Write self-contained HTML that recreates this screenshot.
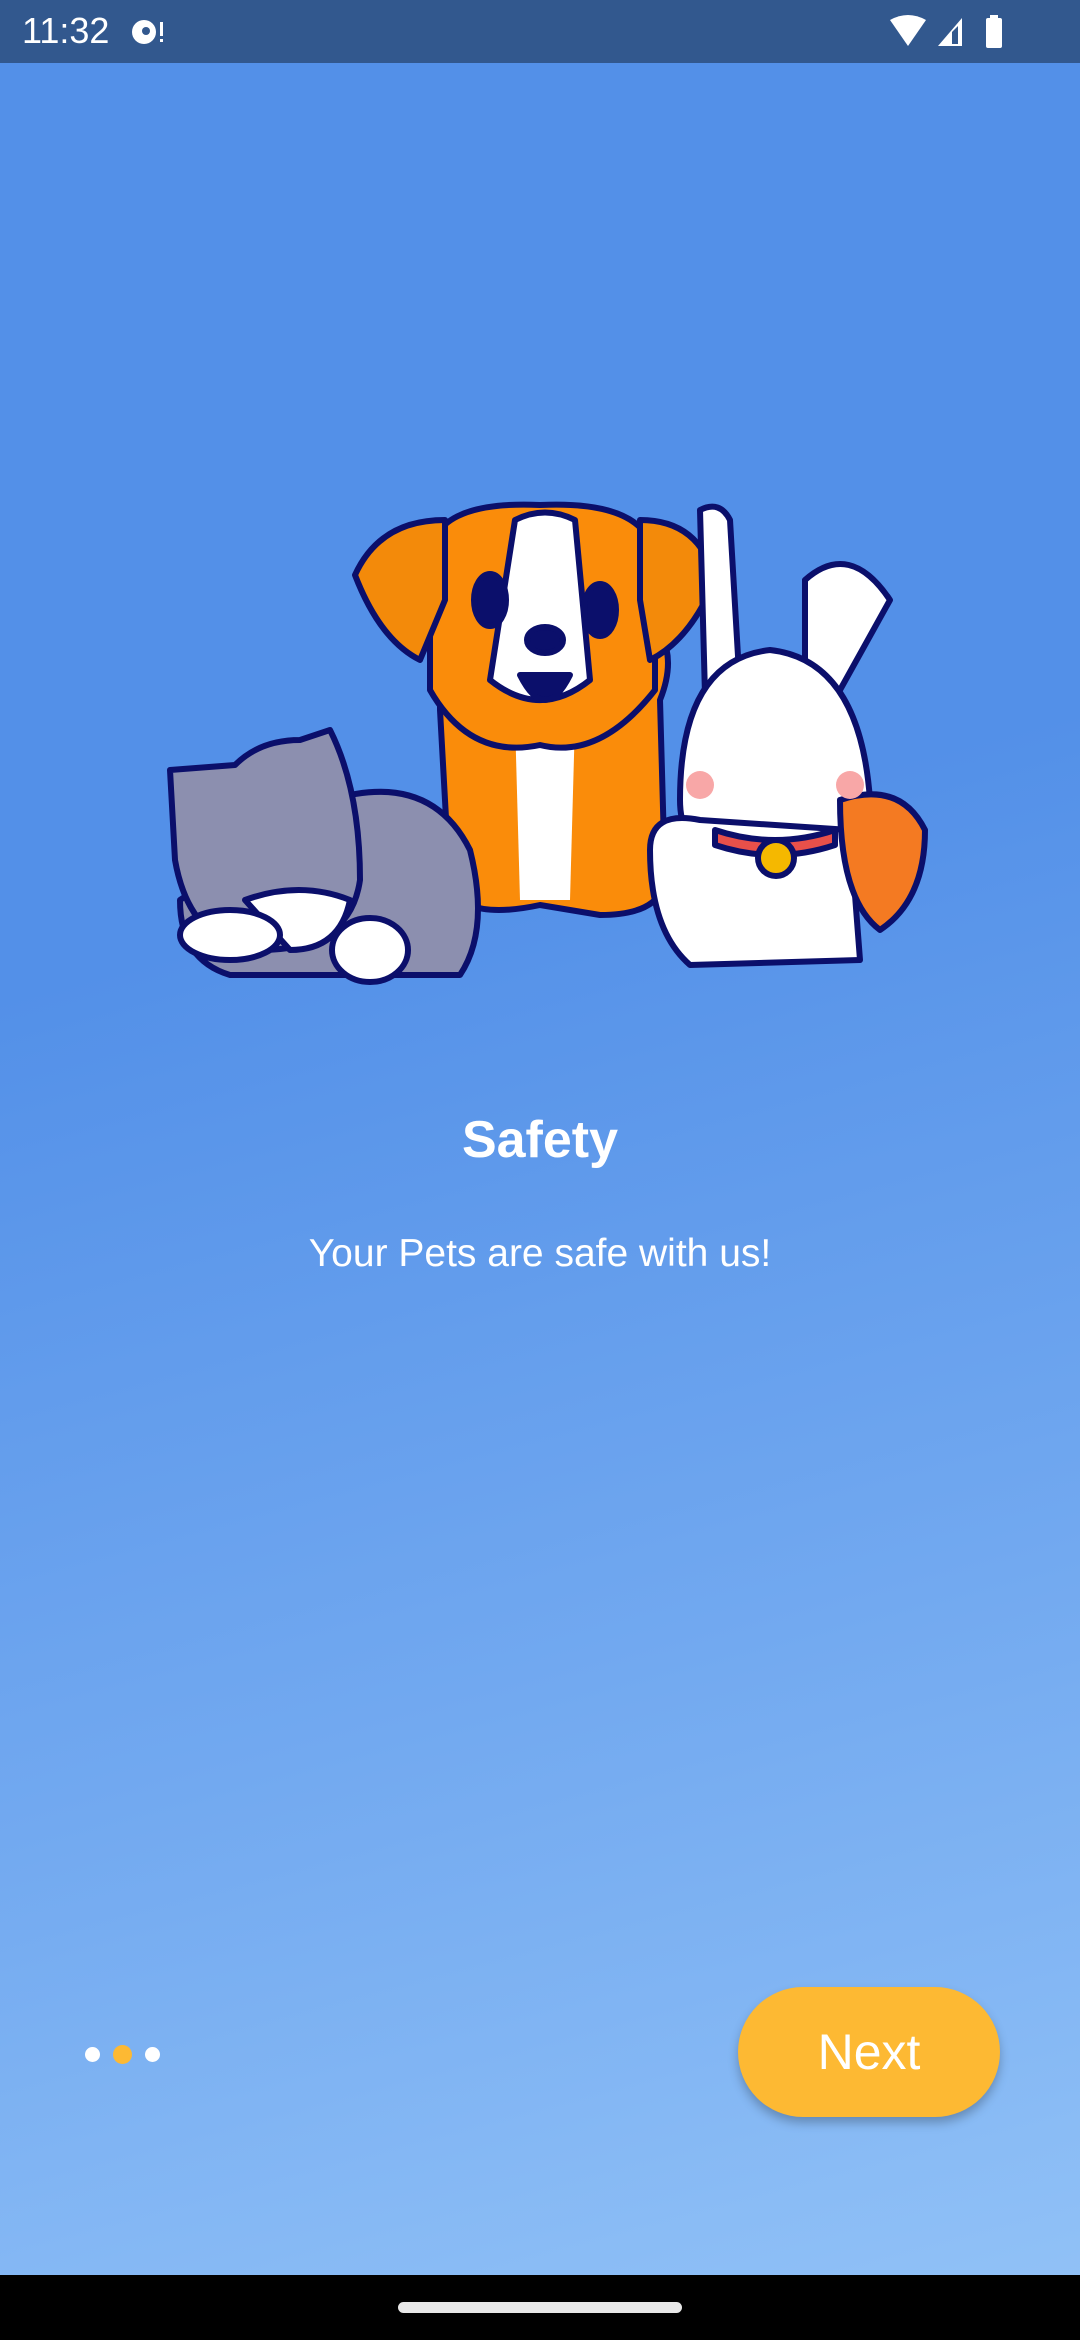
<!DOCTYPE html>
<html><head><meta charset="utf-8"><style>
html,body{margin:0;padding:0}
body{width:1080px;height:2340px;position:relative;overflow:hidden;font-family:"Liberation Sans",sans-serif;
background:linear-gradient(165deg,#5390E8 0%,#5390E8 38%,#72A9F0 70%,#93C3F7 100%);}
.sb{position:absolute;left:0;top:0;width:1080px;height:63px;background:#32588E;color:#fff}
.nav{position:absolute;left:0;top:2275px;width:1080px;height:65px;background:#000}
.pill{position:absolute;left:398px;top:27px;width:284px;height:11px;border-radius:6px;background:#e8e8e8}
.t1{position:absolute;top:1110px;width:100%;text-align:center;color:#fff;font-weight:bold;font-size:52px}
.t2{position:absolute;top:1232px;width:100%;text-align:center;color:#fff;font-size:39px}
.dot{position:absolute;top:2047px;width:15px;height:15px;border-radius:50%;background:#fff}
.btn{position:absolute;left:738px;top:1987px;width:262px;height:130px;border-radius:65px;background:#FDB933;color:#fff;font-size:50px;text-align:center;line-height:130px;box-shadow:0 6px 10px rgba(0,0,0,.25)}
</style></head><body>
<div class="sb">
<div style="position:absolute;left:22px;top:10px;font-size:36px">11:32</div>
<svg style="position:absolute;left:128px;top:16px" width="40" height="32"><circle cx="16" cy="16" r="12" fill="#fff"/><circle cx="18" cy="15" r="4" fill="#32588E"/><rect x="32" y="6" width="3" height="14" fill="#fff"/><rect x="32" y="23" width="3" height="3" fill="#fff"/></svg>
<svg style="position:absolute;left:888px;top:14px" width="130" height="36"><path d="M2 6 Q20 -4 38 6 L20 32 Z" fill="#fff"/><path d="M50 32 L74 4 L74 32 Z" fill="#fff"/><path d="M64 30 L64 18 L70 12 L70 30Z" fill="#32588E"/><rect x="98" y="4" width="16" height="30" rx="2" fill="#fff"/><rect x="102" y="1" width="8" height="4" fill="#fff"/></svg>
</div>

<svg style="position:absolute;left:0;top:0" width="1080" height="1100" viewBox="0 0 1080 1100">
<g stroke="#0B0F6B" stroke-width="6" stroke-linejoin="round">
<!-- dog -->
<path d="M440 710 L450 890 Q470 920 540 905 L600 915 Q660 915 665 880 L660 700 Q680 650 650 620 L540 600 L440 640Z" fill="#FA8C0A"/>
<path d="M515 720 Q545 700 575 720 L570 900 L520 900Z" fill="#fff" stroke="none"/>
<path d="M430 560 Q430 500 540 505 Q650 500 655 560 L655 690 Q600 760 540 745 Q470 760 430 690Z" fill="#FA8C0A"/>
<path d="M515 520 Q545 505 575 520 L590 680 Q540 720 490 680Z" fill="#fff"/>
<path d="M445 520 Q380 520 355 575 Q380 640 420 660 L445 600Z" fill="#F38A0A"/>
<path d="M640 520 Q700 520 715 580 Q690 640 650 660 L640 600Z" fill="#F38A0A"/>
<ellipse cx="490" cy="600" rx="16" ry="26" fill="#0B0F6B"/><ellipse cx="600" cy="610" rx="16" ry="26" fill="#0B0F6B"/>
<ellipse cx="545" cy="640" rx="18" ry="13" fill="#0B0F6B"/>
<path d="M520 675 Q545 725 570 675Z" fill="#0B0F6B"/>
<!-- cat -->
<path d="M330 800 Q430 770 470 850 Q490 930 460 975 L230 975 Q180 960 180 900Z" fill="#8C8FAF"/>
<path d="M170 770 L175 860 Q190 945 260 950 Q350 950 360 880 Q360 790 330 730 L300 740 Q260 740 235 765 L170 770Z" fill="#8C8FAF"/>
<path d="M245 900 Q300 880 350 900 Q340 950 290 950Z" fill="#fff"/>
<ellipse cx="370" cy="950" rx="38" ry="32" fill="#fff"/>
<ellipse cx="230" cy="935" rx="50" ry="25" fill="#fff"/>
<!-- rabbit -->
<path d="M700 510 Q720 500 730 520 L740 690 L705 695Z" fill="#fff"/>
<path d="M805 580 Q850 540 890 600 L840 690 L805 690Z" fill="#fff"/>
<path d="M680 800 Q680 660 770 650 Q860 660 870 800 Q870 840 840 860 L710 860 Q680 840 680 800Z" fill="#fff"/>
<path d="M650 850 Q650 810 700 820 L850 830 L860 960 L690 965 Q650 930 650 850Z" fill="#fff"/>
<path d="M715 830 Q775 850 835 830 L835 845 Q775 865 715 845Z" fill="#E8504A"/>
<circle cx="776" cy="858" r="18" fill="#F5B800"/>
<path d="M840 800 Q900 780 925 830 Q925 900 880 930 Q840 900 840 800Z" fill="#F47A22"/>
</g>
<circle cx="700" cy="785" r="14" fill="#F8A7A7"/><circle cx="850" cy="785" r="14" fill="#F8A7A7"/>
</svg>

<div class="t1">Safety</div>
<div class="t2">Your Pets are safe with us!</div>
<div class="dot" style="left:85px"></div>
<div class="dot" style="left:113px;width:19px;height:19px;top:2045px;background:#FDB933"></div>
<div class="dot" style="left:145px"></div>
<div class="btn">Next</div>
<div class="nav"><div class="pill"></div></div>
</body></html>
